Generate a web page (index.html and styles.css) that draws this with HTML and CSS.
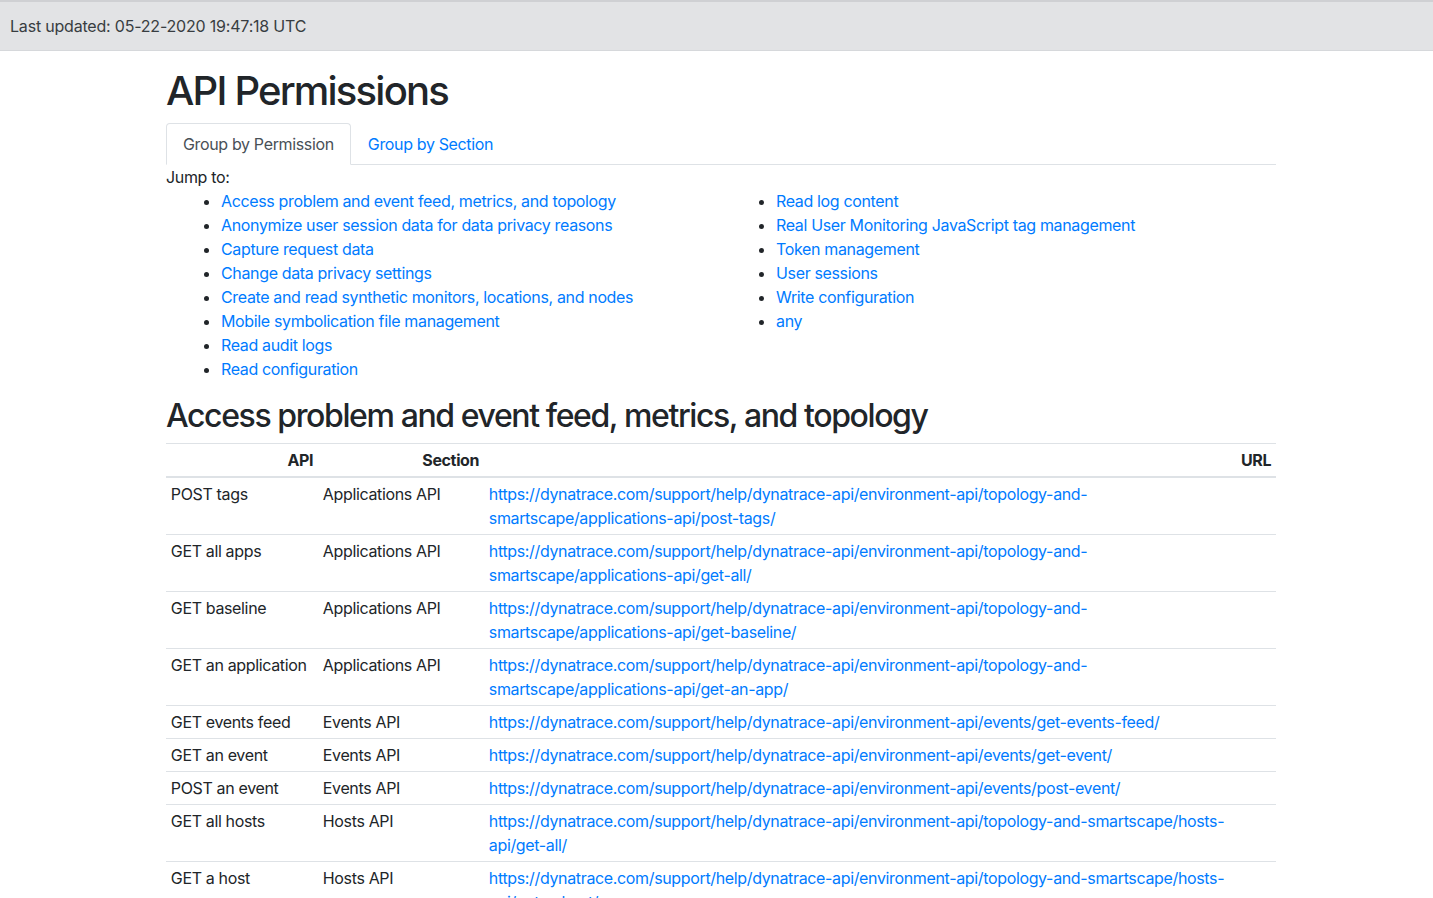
FILE: index.html
```html
<!DOCTYPE html>
<html lang="en">
<head>
<meta charset="utf-8">
<title>API Permissions</title>
<link rel="stylesheet" href="styles.css">
</head>
<body>
<div class="updated">Last updated: 05-22-2020 19:47:18 UTC</div>
<main class="container">
  <h1 class="title">API Permissions</h1>
  <ul class="tabs">
    <li class="tab active"><a href="#">Group by Permission</a></li>
    <li class="tab"><a href="#">Group by Section</a></li>
  </ul>
  <div class="jump-label">Jump to:</div>
  <div class="jump">
    <ul class="jump-list">
      <li><a href="#">Access problem and event feed, metrics, and topology</a></li>
      <li><a href="#">Anonymize user session data for data privacy reasons</a></li>
      <li><a href="#">Capture request data</a></li>
      <li><a href="#">Change data privacy settings</a></li>
      <li><a href="#">Create and read synthetic monitors, locations, and nodes</a></li>
      <li><a href="#">Mobile symbolication file management</a></li>
      <li><a href="#">Read audit logs</a></li>
      <li><a href="#">Read configuration</a></li>
    </ul>
    <ul class="jump-list">
      <li><a href="#">Read log content</a></li>
      <li><a href="#">Real User Monitoring JavaScript tag management</a></li>
      <li><a href="#">Token management</a></li>
      <li><a href="#">User sessions</a></li>
      <li><a href="#">Write configuration</a></li>
      <li><a href="#">any</a></li>
    </ul>
  </div>
  <h2 class="section-title">Access problem and event feed, metrics, and topology</h2>
  <table class="perm-table">
    <colgroup>
      <col class="c-api">
      <col class="c-section">
      <col class="c-url">
    </colgroup>
    <thead>
      <tr><th>API</th><th>Section</th><th>URL</th></tr>
    </thead>
    <tbody>
      <tr><td>POST tags</td><td>Applications API</td><td><a href="#">https://dynatrace.com/support/help/dynatrace-api/environment-api/topology-and-smartscape/applications-api/post-tags/</a></td></tr>
      <tr><td>GET all apps</td><td>Applications API</td><td><a href="#">https://dynatrace.com/support/help/dynatrace-api/environment-api/topology-and-smartscape/applications-api/get-all/</a></td></tr>
      <tr><td>GET baseline</td><td>Applications API</td><td><a href="#">https://dynatrace.com/support/help/dynatrace-api/environment-api/topology-and-smartscape/applications-api/get-baseline/</a></td></tr>
      <tr><td>GET an application</td><td>Applications API</td><td><a href="#">https://dynatrace.com/support/help/dynatrace-api/environment-api/topology-and-smartscape/applications-api/get-an-app/</a></td></tr>
      <tr><td>GET events feed</td><td>Events API</td><td><a href="#">https://dynatrace.com/support/help/dynatrace-api/environment-api/events/get-events-feed/</a></td></tr>
      <tr><td>GET an event</td><td>Events API</td><td><a href="#">https://dynatrace.com/support/help/dynatrace-api/environment-api/events/get-event/</a></td></tr>
      <tr><td>POST an event</td><td>Events API</td><td><a href="#">https://dynatrace.com/support/help/dynatrace-api/environment-api/events/post-event/</a></td></tr>
      <tr><td>GET all hosts</td><td>Hosts API</td><td><a href="#">https://dynatrace.com/support/help/dynatrace-api/environment-api/topology-and-smartscape/hosts-api/get-all/</a></td></tr>
      <tr><td>GET a host</td><td>Hosts API</td><td><a href="#">https://dynatrace.com/support/help/dynatrace-api/environment-api/topology-and-smartscape/hosts-api/get-a-host/</a></td></tr>
      <tr><td>GET baseline</td><td>Hosts API</td><td><a href="#">https://dynatrace.com/support/help/dynatrace-api/environment-api/topology-and-smartscape/hosts-api/get-baseline/</a></td></tr>
    </tbody>
  </table>
</main>
</body>
</html>
```

FILE: styles.css
```css
* { box-sizing: border-box; }

html, body {
  margin: 0;
  padding: 0;
}

body {
  font-family: Inter, "Noto Sans", "Liberation Sans", sans-serif;
  font-size: 16px;
  line-height: 24px;
  letter-spacing: -0.35px;
  color: #212529;
  background: #fff;
}

a {
  color: #007bff;
  text-decoration: none;
}

.updated {
  background: #e2e3e5;
  border-top: 2px solid #cfd0d3;
  border-bottom: 1px solid #d6d8db;
  color: #383d41;
  padding: 12px 10px 12px;
  height: 51px;
  letter-spacing: -0.2px;
}

.container {
  width: 1110px;
  margin: 0 0 0 166px;
}

.title {
  font-size: 40px;
  font-weight: 500;
  line-height: 48px;
  letter-spacing: -1.8px;
  margin: 16px 0 8px;
}

.tabs {
  list-style: none;
  margin: 0;
  padding: 0;
  display: flex;
  border-bottom: 1px solid #dee2e6;
}

.tab {
  margin-bottom: -1px;
}

.tab a {
  display: block;
  padding: 8px 16px;
  border: 1px solid transparent;
  border-top-left-radius: 4px;
  border-top-right-radius: 4px;
}

.tab.active a {
  color: #495057;
  background: #fff;
  border-color: #dee2e6 #dee2e6 #fff;
}

.jump-label {
  margin: 0;
}

.jump {
  display: grid;
  grid-template-columns: 555px 555px;
}

.jump-list {
  margin: 0 0 16px;
  padding: 0 15px 0 55px;
}

.section-title {
  font-size: 32px;
  font-weight: 500;
  line-height: 38px;
  letter-spacing: -1.4px;
  margin: 0 0 8px;
}

.perm-table {
  width: 100%;
  border-collapse: collapse;
  table-layout: fixed;
}

.c-api { width: 152px; }
.c-section { width: 166px; }

.perm-table th,
.perm-table td {
  padding: 4px 4.8px;
  border-top: 1px solid #dee2e6;
  vertical-align: top;
}

.perm-table th {
  text-align: right;
  font-weight: 700;
  border-bottom: 2px solid #dee2e6;
}

.perm-table td {
  text-align: left;
}
```
